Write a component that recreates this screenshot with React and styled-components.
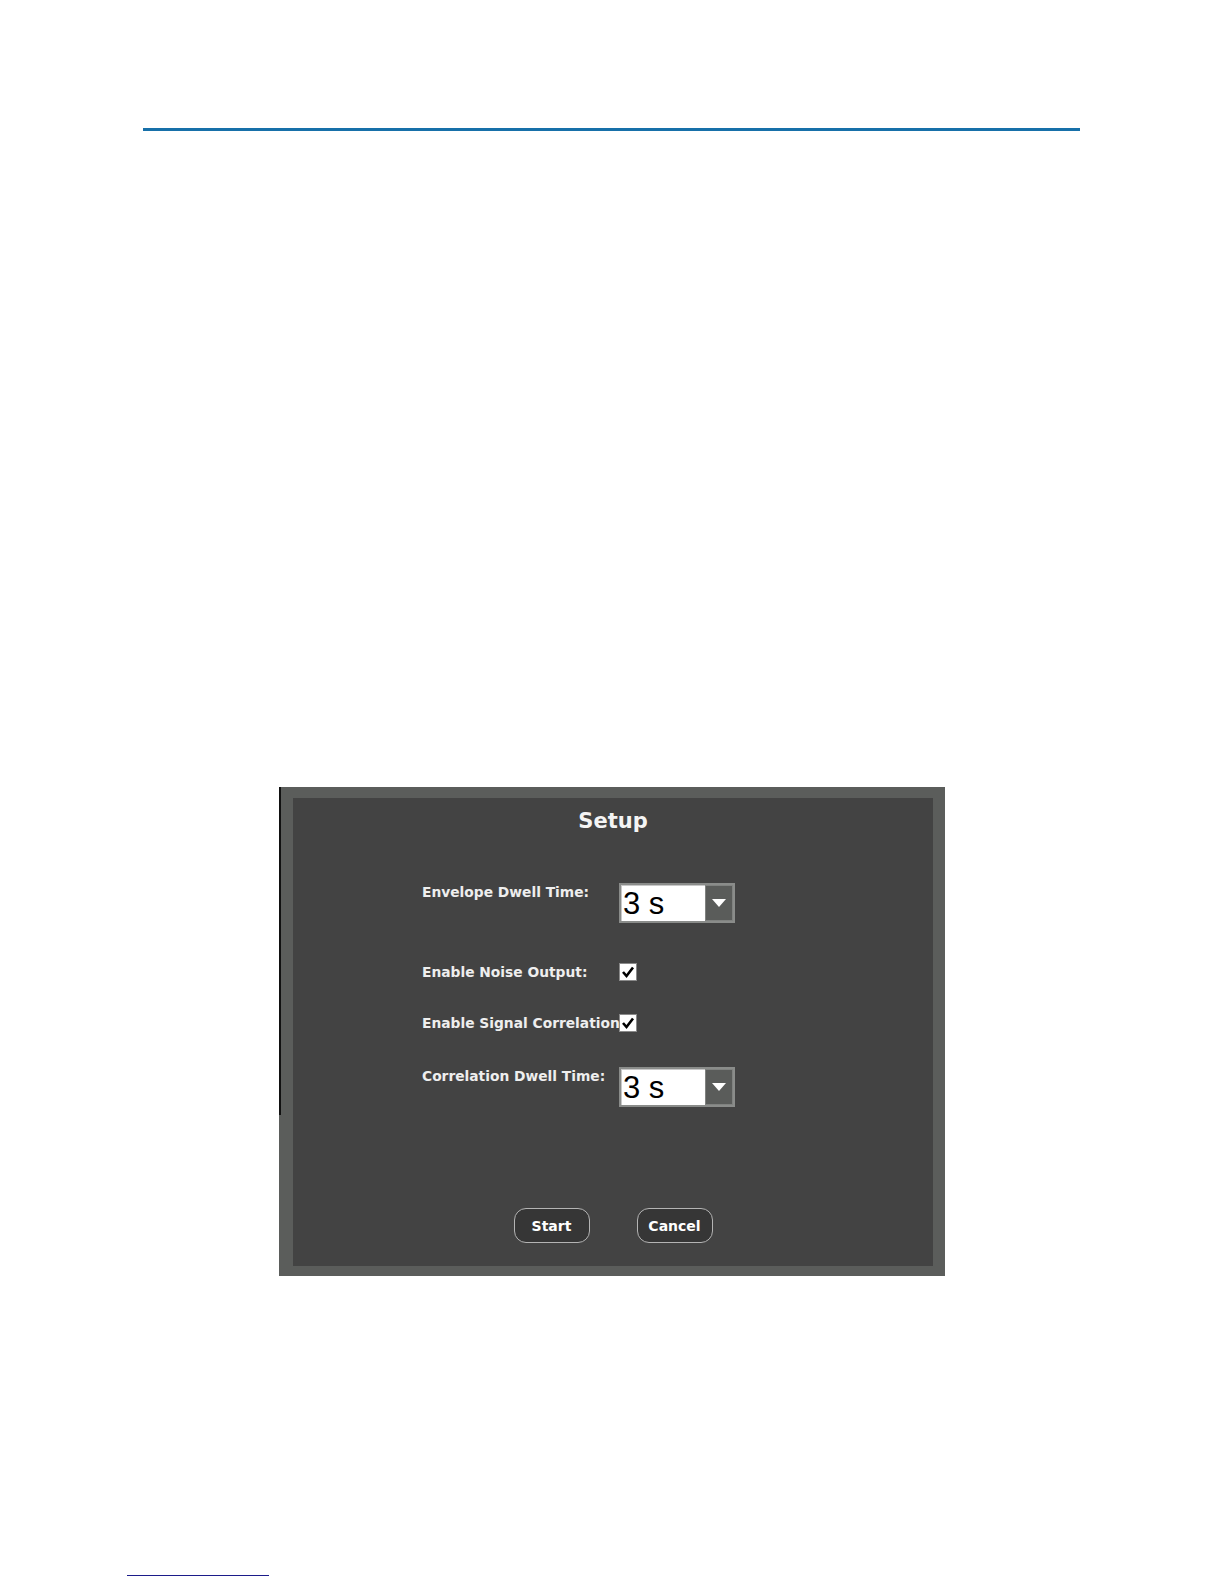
import styled, { createGlobalStyle } from 'styled-components'

const GlobalStyle = createGlobalStyle`
  html, body {
    margin: 0;
    padding: 0;
    background: #ffffff;
  }
  * {
    box-sizing: border-box;
  }
`

const rows = [
  { label: 'Envelope Dwell Time:', kind: 'select', value: '3 s', gap: 0 },
  { label: 'Enable Noise Output:', kind: 'check', gap: 40 },
  { label: 'Enable Signal Correlation', kind: 'check', gap: 33 },
  { label: 'Correlation Dwell Time:', kind: 'select', value: '3 s', gap: 35 },
]

function Check() {
  return (
    <CheckBox>
      <svg width="14" height="14" viewBox="0 0 14 14">
        <path d="M2 7 L5.5 11 L12 2.5" fill="none" stroke="#000" strokeWidth="2.6" />
      </svg>
    </CheckBox>
  )
}

function Select({ value }) {
  return (
    <SelectBox>
      <SelectValue>{value}</SelectValue>
      <SelectButton>
        <svg width="14" height="8" viewBox="0 0 14 8">
          <polygon points="0,0 14,0 7,8" fill="#fff" />
        </svg>
      </SelectButton>
    </SelectBox>
  )
}

export default function App() {
  return (
    <Page>
      <GlobalStyle />
      <TopRule />
      <Dialog>
        <Inner>
          <Title>Setup</Title>
          <Form>
            {rows.map((r) => (
              <Row key={r.label} $gap={r.gap} $kind={r.kind}>
                <Label $kind={r.kind}>{r.label}</Label>
                {r.kind === 'select' ? <Select value={r.value} /> : <Check />}
              </Row>
            ))}
          </Form>
          <Buttons>
            <Button>Start</Button>
            <Button>Cancel</Button>
          </Buttons>
        </Inner>
      </Dialog>
      <FootRule />
    </Page>
  )
}

const Page = styled.div`
  width: 1224px;
  height: 1584px;
  padding-top: 128px;
  overflow: hidden;
`

const TopRule = styled.div`
  margin-left: 143px;
  width: 937px;
  height: 3px;
  background: #1770a9;
`

const Dialog = styled.div`
  position: relative;
  margin: 656px 0 0 279px;
  width: 666px;
  height: 489px;
  background: #5b5d5b;
  padding: 11px 12px 10px 14px;

  &::before {
    content: '';
    position: absolute;
    left: 0;
    top: 0;
    width: 2px;
    height: 328px;
    background: #111;
  }
`

const Inner = styled.div`
  height: 100%;
  background: #434343;
  display: flex;
  flex-direction: column;
  font-family: 'DejaVu Sans', Verdana, sans-serif;
  color: #f2f2f2;
`

const Title = styled.div`
  padding-top: 8px;
  height: 38px;
  line-height: 30px;
  font-size: 21px;
  font-weight: bold;
  text-align: center;
  color: #f4f4f4;
`

const Form = styled.div`
  margin: 47px 0 0 129px;
  display: flex;
  flex-direction: column;
`

const Row = styled.div`
  display: flex;
  align-items: ${(p) => (p.$kind === 'select' ? 'flex-start' : 'center')};
  margin-top: ${(p) => p.$gap}px;
`

const Label = styled.div`
  width: 197px;
  font-size: 13.8px;
  font-weight: bold;
  line-height: 17px;
  white-space: nowrap;
  color: #eeeeee;
  padding-top: ${(p) => (p.$kind === 'select' ? '1px' : '0')};
`

const SelectBox = styled.div`
  width: 116px;
  height: 40px;
  display: flex;
  background: #ffffff;
  border: 2px solid #8a8c8a;
  box-shadow: inset 1px 1px 0 #c8c8c8;
`

const SelectValue = styled.div`
  flex: 1;
  padding-left: 2px;
  font-family: 'Liberation Sans', Arial, sans-serif;
  font-size: 31px;
  line-height: 37px;
  color: #000;
`

const SelectButton = styled.div`
  width: 28px;
  height: 100%;
  background: #5a5c5a;
  border: 1px solid #808280;
  display: flex;
  align-items: center;
  justify-content: center;
`

const CheckBox = styled.div`
  width: 18px;
  height: 18px;
  background: #ffffff;
  border: 1px solid #8a8a8a;
  display: flex;
  align-items: center;
  justify-content: center;
`

const Buttons = styled.div`
  margin-top: 101px;
  display: flex;
  justify-content: center;
  gap: 47px;
`

const Button = styled.button`
  width: 76px;
  height: 35px;
  border-radius: 12px;
  border: 1px solid #b4b4b4;
  background: #363636;
  color: #ffffff;
  font-family: 'DejaVu Sans', Verdana, sans-serif;
  font-size: 14px;
  font-weight: bold;
  padding: 0;
`

const FootRule = styled.div`
  margin: 299px 0 0 127px;
  width: 142px;
  height: 1px;
  background: #1c1c8a;
`
